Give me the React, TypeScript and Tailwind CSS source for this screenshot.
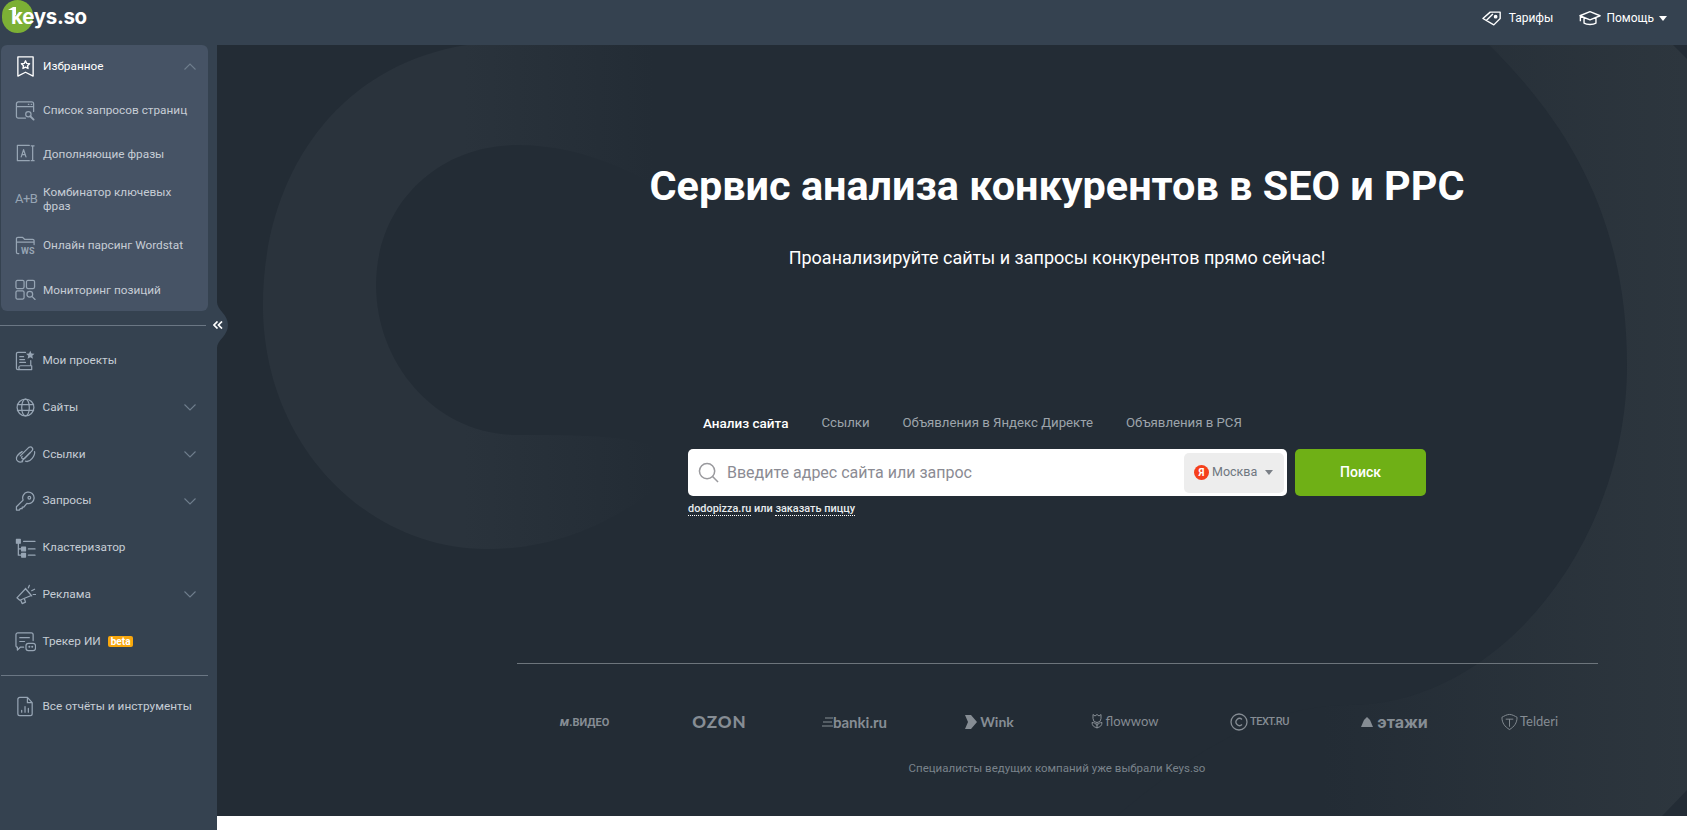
import type { ReactNode } from 'react';

const Ico = ({ children, className = 'text-[#97a5b4]' }: { children: ReactNode; className?: string }) => (
  <svg
    viewBox="0 0 22 22"
    fill="none"
    stroke="currentColor"
    strokeWidth="1.3"
    strokeLinecap="round"
    strokeLinejoin="round"
    className={`w-[21px] h-[21px] shrink-0 ${className}`}
  >
    {children}
  </svg>
);

const Chevron = ({ up }: { up?: boolean }) => (
  <svg viewBox="0 0 12 7" fill="none" stroke="currentColor" strokeWidth="1.1" className="w-3 h-[7px] ml-auto text-[#6f7e8d]">
    <path d={up ? 'M.5 6.5 6 1l5.5 5.5' : 'M.5.5 6 6 11.5.5'} />
  </svg>
);

const favorites: { label: ReactNode; icon: ReactNode; h: string }[] = [
  {
    label: 'Список запросов страниц',
    h: 'h-[44px]',
    icon: (
      <Ico>
        <path d="M11 19H3.500A2 2 0 0 1 1.500 17V4A2 2 0 0 1 3.500 2h14a2 2 0 0 1 2 2v8M1.500 7h18M14 4.500h.5M17 4.500h.5" />
        <circle cx="14" cy="15" r="2.800" />
        <path d="m16 17 3.500 3.500" strokeWidth="2" />
      </Ico>
    ),
  },
  {
    label: 'Дополняющие фразы',
    h: 'h-[43px]',
    icon: (
      <Ico>
        <path d="M15 2.500H2.500v16H15M6.500 14.500 9 7l2.500 7.500M7.300 12.300h3.400M17 3h3M17 18.500h3M18.500 3v15.500" />
      </Ico>
    ),
  },
  {
    label: (
      <>
        Комбинатор ключевых
        <br />
        фраз
      </>
    ),
    h: 'h-[47px]',
    icon: <span className="w-[21px] shrink-0 text-[13px] tracking-[-0.5px] text-[#97a5b4]">A+B</span>,
  },
  {
    label: 'Онлайн парсинг Wordstat',
    h: 'h-[46px]',
    icon: (
      <span className="relative w-[21px] h-[21px] shrink-0">
        <Ico>
          <path d="M20 10V6a1.500 1.500 0 0 0-1.500-1.500H10L8 2.500H3A1.500 1.500 0 0 0 1.500 4v14A1.500 1.500 0 0 0 3 19.500h1M1.500 7.500H20" />
        </Ico>
        <span className="absolute left-[6px] top-[9px] text-[9px] font-bold text-[#97a5b4]">WS</span>
      </span>
    ),
  },
  {
    label: 'Мониторинг позиций',
    h: 'h-[43px]',
    icon: (
      <Ico>
        <rect x="1" y="1.500" width="8.500" height="8.500" rx="1.500" />
        <rect x="12" y="1.500" width="8.500" height="8.500" rx="1.500" />
        <rect x="1" y="12.500" width="8.500" height="8.500" rx="1.500" />
        <circle cx="15.500" cy="16" r="3" />
        <path d="m18 18.500 3 3" />
      </Ico>
    ),
  },
];

const menu: { label: string; icon: ReactNode; more?: boolean; beta?: boolean }[] = [
  {
    label: 'Мои проекты',
    icon: (
      <Ico>
        <path d="M11 2.500H3A1.500 1.500 0 0 0 1.500 4v15A1.500 1.500 0 0 0 3 20.500h14.500v-4H6a1.500 1.500 0 0 0 0 4M16.500 11v5.500M5 7h4M5 10h5M5 13h6" />
        <path d="m16 .8 1.300 2.900 3.100.3-2.300 2.100.7 3.100-2.800-1.600-2.800 1.600.7-3.100L11.600 4l3.100-.3z" fill="currentColor" stroke="none" />
      </Ico>
    ),
  },
  {
    label: 'Сайты',
    more: true,
    icon: (
      <Ico>
        <circle cx="11" cy="11" r="8.800" />
        <ellipse cx="11" cy="11" rx="4" ry="8.800" />
        <path d="M2.500 8h17M2.500 14h17" />
      </Ico>
    ),
  },
  {
    label: 'Ссылки',
    more: true,
    icon: (
      <Ico>
        <path d="M8 18.500C4 20 1 17.500 1.500 14.500 2 12 5 9.500 7.500 8" />
        <path d="M7.500 17.500 17.500 7.500C20 5 17.500 2 14.500 3.500L5.500 12.500" />
        <path d="M11 18c2 .8 5-.5 7-3 1.800-2.300 3-5 2.500-7" />
        <path d="M7.500 13c-1.500 2 .5 3.500 2.500 2l6-6" />
      </Ico>
    ),
  },
  {
    label: 'Запросы',
    more: true,
    icon: (
      <Ico>
        <path d="M8.500 9.500 1.500 16.500v3.500h3l1-1.500h2V17h1.500l3.500-4a6 6 0 1 0-4-3.500z" />
        <circle cx="15" cy="7" r="1.400" />
      </Ico>
    ),
  },
  {
    label: 'Кластеризатор',
    icon: (
      <Ico>
        <rect x="1.500" y="1.500" width="4" height="4" fill="currentColor" />
        <rect x="7" y="9.500" width="4" height="4" fill="currentColor" />
        <rect x="7" y="16" width="4" height="4" fill="currentColor" />
        <path d="M3.500 5.500V18H7M3.500 11.500H7M9 3.500h12M14 11.500h7M14 18h7" />
      </Ico>
    ),
  },
  {
    label: 'Реклама',
    more: true,
    icon: (
      <Ico>
        <path d="M2 14.500 11 5l6 7-12 5zM6 17l1.500 3.500 3.500-1.500-1-3M11 4.500l6.500 8M14 4l1-2.500M17.500 7l3-1.500M19 11h2.500" />
      </Ico>
    ),
  },
  {
    label: 'Трекер ИИ',
    beta: true,
    icon: (
      <Ico>
        <path d="M9 17H5.500L2.500 20v-3A1.500 1.500 0 0 1 1 15.500V4a2 2 0 0 1 2-2h14a2 2 0 0 1 2 2v6M5 7h10M5 11h5" />
        <rect x="11.500" y="13" width="10" height="7.500" rx="2.500" />
        <path d="M15 16.500h.1M18 16.500h.1" strokeWidth="2" />
      </Ico>
    ),
  },
];

const Logos = () => (
  <div className="grid grid-cols-8 w-[1080px] mt-[45px] text-[#868d94] h-[24px] items-center justify-items-center">
    <span className="text-[11px] font-bold">
      <span className="italic text-[13px]">м</span>.ВИДЕО
    </span>
    <span className="font-[Lato] text-[17px] font-black tracking-[1px]">OZON</span>
    <span className="flex items-center font-[Lato] text-[15px] font-bold">
      <svg viewBox="0 0 11 10" className="w-[11px] h-[10px]" stroke="currentColor" strokeWidth="1.200">
        <path d="M3 1h8M1 5h9M0 9h11" />
      </svg>
      banki.ru
    </span>
    <span className="flex items-center gap-[3px] font-[Lato] text-[14px] font-bold">
      <svg viewBox="0 0 12 14" className="w-[12px] h-[14px]" fill="currentColor">
        <path d="M0 0h6l6 7-6 7H0l3-7z" />
      </svg>
      Wink
    </span>
    <span className="flex items-center gap-[3px] font-[Lato] text-[13px]">
      <svg viewBox="0 0 12 16" className="w-[12px] h-[17px]" fill="none" stroke="currentColor">
        <path d="M2 1l2 1.500L6 1l2 1.500L10 1v4a4 4 0 0 1-8 0zM6 9v6M1 9c0 3 2 5 5 5 3 0 5-2 5-5-2 0-4 1-5 3-1-2-3-3-5-3z" />
      </svg>
      flowwow
    </span>
    <span className="flex items-center gap-[2px] text-[11px] font-medium tracking-[-0.5px]">
      <svg viewBox="0 0 18 18" className="w-[18px] h-[18px]" fill="none" stroke="currentColor" strokeWidth="1.300">
        <circle cx="9" cy="9" r="8" />
        <path d="M12 6.500a3.500 3.500 0 1 0 0 5" />
      </svg>
      TEXT.RU
    </span>
    <span className="flex items-center gap-[4px] font-[Inter] text-[16px] font-bold">
      <svg viewBox="0 0 12 10" className="w-[12px] h-[10px]" fill="currentColor">
        <path d="M0 10 3 3l3-3 3 3 3 7z" />
      </svg>
      этажи
    </span>
    <span className="flex items-center gap-[2px] font-[Lato] text-[13px] leading-none">
      <svg viewBox="0 0 18 18" className="w-[17px] h-[18px]" fill="none" stroke="currentColor">
        <path d="M1 4c2-1 5-3 8-3s6 2 8 3c0 6-3 10-8 13C4 14 1 10 1 4zM5 6h8M9 6v8" />
      </svg>
      Telderi
    </span>
  </div>
);

export default function App() {
  return (
    <div className="h-screen w-full flex flex-col overflow-hidden bg-white font-[Roboto,sans-serif]">
      <header className="h-[45px] shrink-0 bg-[#354250] flex items-center relative">
        <div className="absolute left-[2px] top-0 w-[31px] h-[33px] rounded-full bg-[#7cb035]" />
        <svg viewBox="0 0 8 8" className="absolute left-[8px] top-[7px] w-[8px] h-[8px]" fill="white">
          <path d="M0 3 5 0h3v8H5V3z" />
        </svg>
        <span className="relative ml-[11px] mt-[-11px] text-[20.500px] font-[Inter] font-bold tracking-[-0.3px] text-white leading-none">
          keys.so
        </span>
        <div className="ml-auto flex items-center text-[12px] text-white mt-[-9px]">
          <svg viewBox="0 0 22 18" fill="none" stroke="currentColor" strokeWidth="1.500" strokeLinejoin="round" className="w-[20px] h-[17px]">
            <path d="M1 9 9 2h11v7l-7 7zM5 11l7-7" />
            <circle cx="15" cy="7" r="1.300" fill="currentColor" />
          </svg>
          <span className="ml-[7px]">Тарифы</span>
          <svg viewBox="0 0 24 18" fill="none" stroke="currentColor" strokeWidth="1.500" strokeLinejoin="round" className="ml-[26px] w-[22px] h-[17px]">
            <path d="M1 6 12 1.500 23 6 12 10.500zM5.500 8.500V14c3 2 10 2 13 0V8.500M1.500 6v6" />
          </svg>
          <span className="ml-[5px]">Помощь</span>
          <span className="ml-[5px] w-0 h-0 border-x-[4px] border-x-transparent border-t-[5px] border-t-white" />
          <span className="w-[20px]" />
        </div>
      </header>

      <div className="flex flex-1 min-h-0">
        <aside className="w-[217px] shrink-0 bg-[#354250] pl-px relative z-10 text-[11.800px] text-[#c6cdd5]">
          <div className="w-[207px] h-[266px] rounded-md bg-[#465365]">
            <div className="h-[43px] flex items-center pl-[14px] pr-[12px] text-white">
              <svg viewBox="0 0 22 24" fill="none" stroke="currentColor" strokeWidth="1.400" strokeLinejoin="round" className="w-[21px] h-[23px] shrink-0">
                <path d="M3 2h16v20l-8-4-8 4z" />
                <path d="m11 6 1.300 2.800 3 .3-2.200 2 .6 3L11 12.600 8.300 14.100l.6-3-2.200-2 3-.3z" />
              </svg>
              <span className="ml-[7px]">Избранное</span>
              <Chevron up />
            </div>
            {favorites.map((f, i) => (
              <div key={i} className={`${f.h} flex items-center pl-[14px] leading-[14px]`}>
                {f.icon}
                <span className="ml-[7px]">{f.label}</span>
              </div>
            ))}
          </div>

          <div className="ml-[-1px] mt-[14px] h-px w-[206px] bg-[#6b7784]" />

          <nav className="mt-[11.500px]">
            {menu.map(m => (
              <div key={m.label} className="h-[46.800px] w-[207px] flex items-center pl-[14px] pr-[12px]">
                {m.icon}
                <span className="ml-[6.500px]">{m.label}</span>
                {m.beta && (
                  <span className="ml-[7px] h-[11px] px-[3px] rounded-[2px] bg-[#f9a70d] text-white text-[10px] font-bold leading-[11px]">
                    beta
                  </span>
                )}
                {m.more && <Chevron />}
              </div>
            ))}
          </nav>

          <div className="mt-[9.500px] h-px w-[207px] bg-[#6b7784]" />

          <div className="mt-[8px] h-[46.800px] flex items-center pl-[14px]">
            <Ico>
              <path d="M13 1.500H5A2 2 0 0 0 3 3.500v15a2 2 0 0 0 2 2h11a2 2 0 0 0 2-2V7zM13 1.500V7h5M7 17v-2M10.500 17v-6M14 17v-4" />
            </Ico>
            <span className="ml-[6.500px]">Все отчёты и инструменты</span>
          </div>

          {/* ручка сворачивания */}
          <div className="absolute left-[208px] top-[257px] w-[20px] h-[46px] flex items-center justify-center">
            <svg viewBox="0 0 20 46" className="absolute inset-0 w-full h-full" fill="#354250">
              <path d="M0 0h9c0 8 11 12 11 23S9 38 9 46H0z" />
            </svg>
            <svg viewBox="0 0 10 8" fill="none" stroke="white" strokeWidth="1.700" className="relative w-[10px] h-[8px]">
              <path d="M4.500.5 1 4l3.500 3.500M9 .5 5.500 4 9 7.500" />
            </svg>
          </div>
        </aside>

        <main className="relative flex-1 h-[771px] bg-[#232c35] overflow-hidden flex flex-col items-center pl-[300px] pr-[90px] text-white">
          <svg viewBox="0 0 1470 771" className="absolute inset-0 w-full h-full">
            <defs>
              <linearGradient id="band" x1="0" y1="0" x2="1" y2="0">
                <stop offset="0.6" stopColor="#232c35" />
                <stop offset="1" stopColor="#2d363e" />
              </linearGradient>
              <linearGradient id="lobe" x1="0" y1="0" x2="1" y2="0">
                <stop offset="0" stopColor="#2a333c" />
                <stop offset="0.35" stopColor="#2a333c" />
                <stop offset="0.68" stopColor="#232c35" />
              </linearGradient>
            </defs>
            <path d="M560 0H1456L1470 14V745L1445 771H560z" fill="url(#band)" />
            <path d="M1133 660C1280 660 1410 500 1410 320 1410 150 1330 50 1240-30H500V771H900C960 720 1040 660 1133 660z" fill="#232c35" />
            <path
              d="M250 0C120 20 46 130 46 260 46 400 150 504 270 504 350 504 410 470 470 420 440 390 380 390 300 390 220 390 159 320 159 240 159 160 220 100 300 100 370 100 430 130 500 180L620 60C560 20 480 0 430 0z"
              fill="url(#lobe)"
            />
          </svg>

          <div className="relative flex flex-col items-center w-full">
            <h1 className="mt-[117px] text-[41.400px] leading-[48px] font-bold whitespace-nowrap">Сервис анализа конкурентов в SEO и PPC</h1>
            <p className="mt-[36px] text-[18px] leading-[24px] whitespace-nowrap">Проанализируйте сайты и запросы конкурентов прямо сейчас!</p>

            <div className="mt-[143px] w-[738px]">
              <div className="flex pl-[15px] text-[13.200px] leading-[20px] text-[#9da4ab]">
                <span className="font-medium text-[13.500px] text-white">Анализ сайта</span>
                <span className="ml-[33px]">Ссылки</span>
                <span className="ml-[33px]">Объявления в Яндекс Директе</span>
                <span className="ml-[33px]">Объявления в РСЯ</span>
              </div>
              <div className="mt-[16px] flex h-[47px] gap-[8px]">
                <div className="flex-1 flex items-center rounded-[5px] bg-white pr-[3px]">
                  <svg viewBox="0 0 22 22" fill="none" stroke="#9a9a9e" strokeWidth="1.600" className="ml-[10px] w-[21px] h-[21px]">
                    <circle cx="9.500" cy="9.500" r="8" />
                    <path d="m15 15 6 6" />
                  </svg>
                  <span className="ml-[8px] text-[16px] text-[#8b8b93]">Введите адрес сайта или запрос</span>
                  <div className="ml-auto w-[100px] h-[40px] rounded-[5px] bg-[#ededed] flex items-center pl-[10px] text-[12.500px] text-[#6f7780]">
                    <span className="w-[15px] h-[15px] rounded-full bg-[#f5401c] text-white text-[10px] font-bold leading-[15px] text-center">Я</span>
                    <span className="ml-[3px]">Москва</span>
                    <span className="ml-[8px] w-0 h-0 border-x-[4.500px] border-x-transparent border-t-[5px] border-t-[#7b8087]" />
                  </div>
                </div>
                <button className="w-[131px] rounded-[5px] bg-[#6fb016] text-white text-[14px] font-medium">Поиск</button>
              </div>
              <div className="mt-[6px] text-[10.900px] leading-[14px] font-medium text-[#e8ecef]">
                <span className="border-b border-dotted border-white">dodopizza.ru</span>
                <span> или </span>
                <span className="border-b border-dotted border-white">заказать пиццу</span>
              </div>
            </div>

            <div className="mt-[147px] h-px w-[1081px] bg-[#6d757c]" />
            <Logos />
            <p className="mt-[27px] text-[11.500px] leading-[16px] text-[#7a838b]">Специалисты ведущих компаний уже выбрали Keys.so</p>
          </div>
        </main>
      </div>
    </div>
  );
}
